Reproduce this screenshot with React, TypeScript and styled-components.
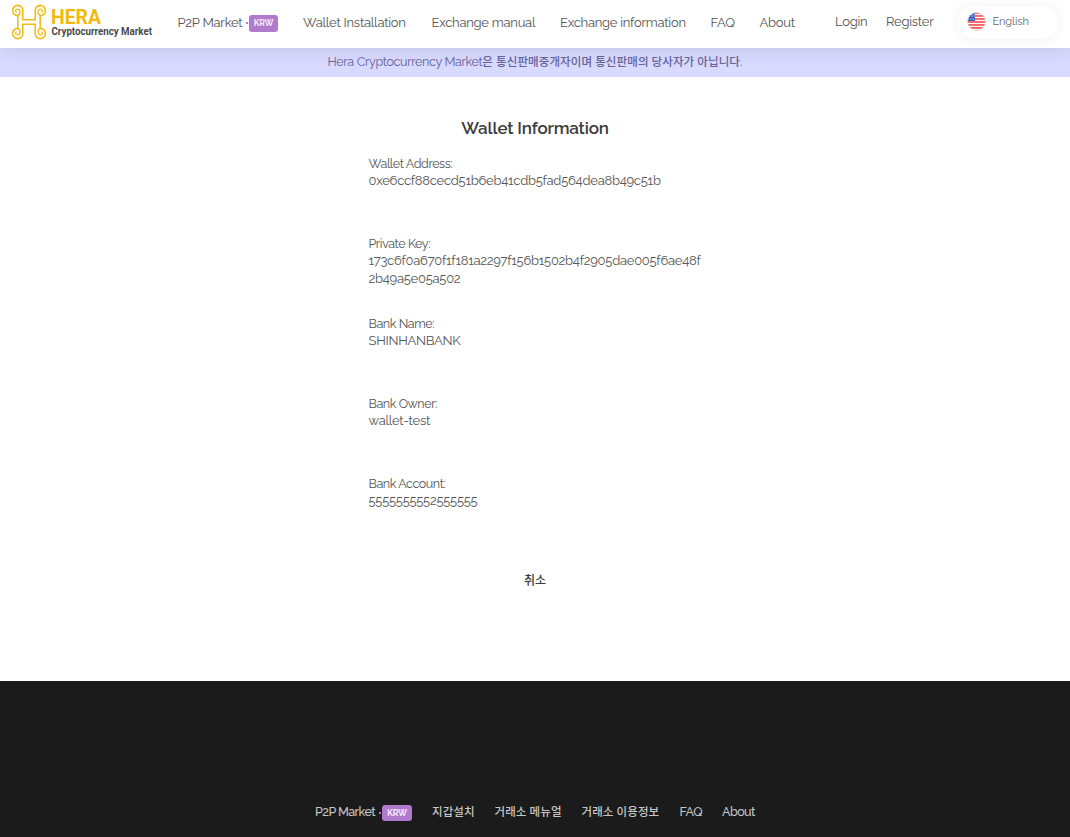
import React from 'react';
import styled, { createGlobalStyle } from 'styled-components';

const GlobalStyle = createGlobalStyle`
  * { box-sizing: border-box; }
  body {
    margin: 0;
    background: #fff;
    color: #555;
    font-family: Raleway, Lato, "Noto Sans CJK KR", sans-serif;
    font-variant-numeric: oldstyle-nums;
  }
`;

const Page = styled.div`
  display: flex;
  flex-direction: column;
  height: 837px;
  overflow: hidden;
`;

const Header = styled.header`
  position: relative;
  z-index: 1;
  display: flex;
  flex: none;
  height: 48px;
  padding-left: 12px;
  background: #fff;
  box-shadow: 0 2px 18px rgba(0, 0, 0, 0.1);
`;

const LogoLink = styled.a`
  flex: none;
  width: 165.5px;
  height: 48px;
`;

const Nav = styled.nav`
  display: flex;
  flex: none;
  width: 657.5px;
  height: 45px;
  align-items: center;
`;

const NavLink = styled.a<{ $width: number }>`
  display: flex;
  flex: none;
  width: ${(p) => p.$width}px;
  font-size: 13px;
  line-height: 20px;
  letter-spacing: -0.25px;
  white-space: nowrap;
`;

const AccountNav = styled(Nav)`
  width: 123px;
  height: 43px;
`;

const Badge = styled.span<{ $width: number; $height: number; $top: number }>`
  position: relative;
  flex: none;
  width: ${(p) => p.$width}px;
  height: ${(p) => p.$height}px;
  margin-top: ${(p) => p.$top}px;
  margin-bottom: -4px;
  border-radius: 3px;
  background: #b07acd;
  color: #f5eafa;
  font-size: 8.5px;
  font-weight: 700;
  line-height: ${(p) => p.$height}px;
  letter-spacing: -0.2px;
  text-align: center;

  &::before {
    content: '';
    position: absolute;
    left: -3px;
    top: 7px;
    width: 2px;
    height: 2px;
    background: #b07acd;
  }
`;

const MarketLabel = styled.span<{ $width: number }>`
  flex: none;
  width: ${(p) => p.$width}px;
`;

const Language = styled.button`
  display: flex;
  align-items: center;
  gap: 7px;
  width: 100px;
  height: 33px;
  margin-top: 6px;
  padding: 0 0 2px 8.5px;
  border: 0;
  border-radius: 17px;
  background: #fff;
  box-shadow: 0 0 14px rgba(0, 0, 0, 0.06);
  color: #666;
  font-family: inherit;
  font-size: 11px;
  letter-spacing: -0.1px;
`;

const Notice = styled.div`
  flex: none;
  height: 29px;
  padding-left: 327.5px;
  background: #d8daff;
  color: #66649c;
  font-size: 12.5px;
  line-height: 28px;
  letter-spacing: -0.33px;
  white-space: nowrap;
`;

const NoticeKorean = styled.span`
  font-size: 11.5px;
  font-weight: 500;
  letter-spacing: 0.1px;
`;

const Main = styled.main`
  display: flex;
  flex: none;
  flex-direction: column;
  align-items: center;
  height: 604px;
  padding-top: 39px;
`;

const Title = styled.h1`
  margin: 0 0 15px;
  color: #3c3c3c;
  font-size: 17px;
  font-weight: 600;
  line-height: 24px;
  letter-spacing: -0.17px;
`;

const Fields = styled.dl`
  width: 333px;
  margin: 0;
`;

const Field = styled.div`
  height: 80px;
`;

const Label = styled.dt`
  font-size: 12.5px;
  line-height: 17px;
  letter-spacing: -0.42px;
`;

const Value = styled.dd`
  margin: 0;
  font-size: 13px;
  line-height: 18px;
  letter-spacing: -0.26px;
  white-space: pre;
`;

const Cancel = styled.button`
  margin-top: 14px;
  padding: 0;
  border: 0;
  background: none;
  color: #3c3c3c;
  font-family: inherit;
  font-size: 12px;
  font-weight: 500;
  line-height: 24px;
`;

const Footer = styled.footer`
  flex: none;
  display: flex;
  height: 156px;
  padding: 121px 0 0 315px;
  background: #1b1b1b;
  color: #c6c6c6;
`;

const FooterLink = styled(NavLink)`
  font-size: 12.5px;
  font-weight: 500;
  letter-spacing: -0.55px;
`;

const FooterKorean = styled(FooterLink)`
  font-size: 11.5px;
  letter-spacing: 0.1px;
`;

const curl = 'M29 19.7H22.8V10.8A5.1 5.1 0 1 0 17.8 15.6V28.4A5.1 5.1 0 1 0 22.8 33.2V24.3H29';
const swirl = 'M17.8 15.4C21 14 20.5 9.2 17.3 9.2C15.3 9.2 14.9 11.7 16.7 12.1M17.8 28.6C21 30 20.5 34.8 17.3 34.8C15.3 34.8 14.9 32.3 16.7 31.9';

const Logo = () => (
  <svg width="160" height="48" aria-label="Hera Cryptocurrency Market">
    <g transform="translate(-12 0)" fill="none" stroke="#f2bc1b" strokeWidth="1.6">
      <path d={curl} />
      <path d={swirl} strokeWidth="1.3" />
      <g transform="translate(58 0) scale(-1 1)">
        <path d={curl} />
        <path d={swirl} strokeWidth="1.3" />
      </g>
    </g>
    <text x="39" y="23.8" fill="#f2b90f" fontFamily="Roboto" fontSize="20.5" fontWeight="700" textLength="50" lengthAdjust="spacingAndGlyphs">HERA</text>
    <text x="39.5" y="34.5" fill="#4a4a4a" fontFamily="Roboto" fontSize="10" fontWeight="700" textLength="100.5" lengthAdjust="spacingAndGlyphs">Cryptocurrency Market</text>
  </svg>
);

const Flag = () => (
  <svg width="19" height="19" viewBox="0 0 19 19">
    <defs>
      <clipPath id="flag"><circle cx="9.5" cy="9.5" r="9" /></clipPath>
    </defs>
    <g clipPath="url(#flag)">
      <rect width="19" height="19" fill="#fff" />
      {[0, 3, 6, 9, 12, 15, 18].map((y) => (
        <rect key={y} y={y} width="19" height="1.9" fill="#fb6464" />
      ))}
      <rect width="8" height="9" fill="#3c62bd" />
      <path d="M2 4h6M1 7h7M3 2h5" stroke="#fff" strokeWidth=".9" strokeDasharray="1 1.4" />
    </g>
    <circle cx="9.5" cy="9.5" r="9" fill="none" stroke="#ddd" strokeWidth=".7" />
  </svg>
);

const fields = [
  { label: 'Wallet Address:', value: '0xe6ccf88cecd51b6eb41cdb5fad564dea8b49c51b' },
  { label: 'Private Key:', value: '173c6f0a670f1f181a2297f156b1502b4f2905dae005f6ae48f\n2b49a5e05a502' },
  { label: 'Bank Name:', value: 'SHINHANBANK' },
  { label: 'Bank Owner:', value: 'wallet-test' },
  { label: 'Bank Account:', value: '5555555552555555' },
];

export default function App() {
  return (
    <>
      <GlobalStyle />
      <Page>
        <Header>
          <LogoLink><Logo /></LogoLink>
          <Nav>
            <NavLink $width={125.5}>
              <MarketLabel $width={71.5}>P2P Market</MarketLabel>
              <Badge $width={29} $height={17} $top={2}>KRW</Badge>
            </NavLink>
            <NavLink $width={128.5}>Wallet Installation</NavLink>
            <NavLink $width={128.5}>Exchange manual</NavLink>
            <NavLink $width={150.5}>Exchange information</NavLink>
            <NavLink $width={49}>FAQ</NavLink>
            <NavLink $width={50}>About</NavLink>
          </Nav>
          <AccountNav>
            <NavLink $width={51}>Login</NavLink>
            <NavLink $width={60}>Register</NavLink>
          </AccountNav>
          <Language><Flag />English</Language>
        </Header>
        <Notice>
          Hera Cryptocurrency Market<NoticeKorean>은 통신판매중개자이며 통신판매의 당사자가 아닙니다.</NoticeKorean>
        </Notice>
        <Main>
          <Title>Wallet Information</Title>
          <Fields>
            {fields.map((f) => (
              <Field key={f.label}>
                <Label>{f.label}</Label>
                <Value>{f.value}</Value>
              </Field>
            ))}
          </Fields>
          <Cancel>취소</Cancel>
        </Main>
        <Footer>
          <FooterLink $width={117}>
            <MarketLabel $width={67}>P2P Market</MarketLabel>
            <Badge $width={30} $height={16} $top={3}>KRW</Badge>
          </FooterLink>
          <FooterKorean $width={62.5}>지갑설치</FooterKorean>
          <FooterKorean $width={87}>거래소 메뉴얼</FooterKorean>
          <FooterKorean $width={98}>거래소 이용정보</FooterKorean>
          <FooterLink $width={42.5}>FAQ</FooterLink>
          <FooterLink $width={40}>About</FooterLink>
        </Footer>
      </Page>
    </>
  );
}
